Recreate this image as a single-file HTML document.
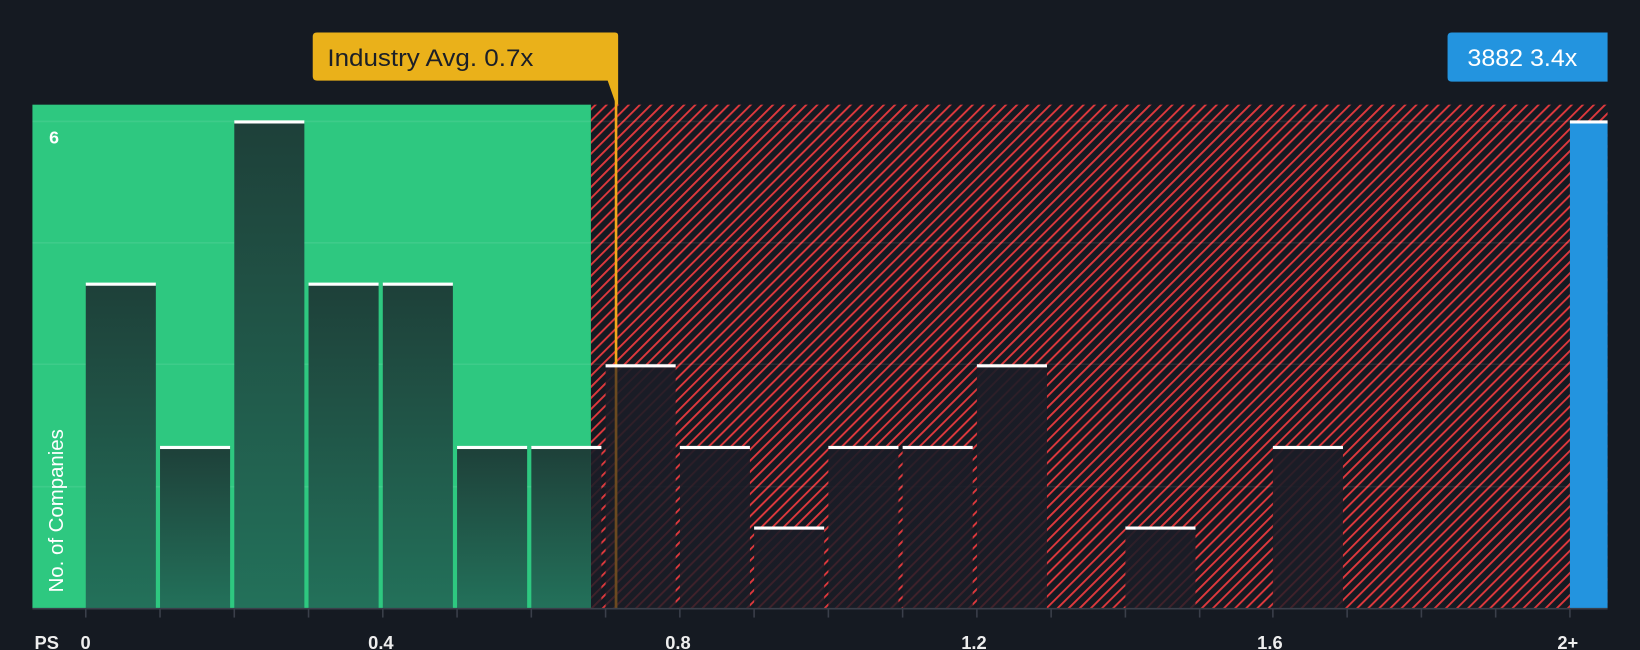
<!DOCTYPE html>
<html><head><meta charset="utf-8"><style>
html,body{margin:0;padding:0;background:#151a22;width:1640px;height:650px;overflow:hidden}
svg{display:block}
text{font-family:"Liberation Sans",Arial,sans-serif}
</style></head><body>
<svg width="1640" height="650" viewBox="0 0 1568 621" preserveAspectRatio="none" xmlns="http://www.w3.org/2000/svg">
<defs>
<pattern id="h" patternUnits="userSpaceOnUse" width="7.5" height="7.5" patternTransform="rotate(45)">
<rect width="7.5" height="7.5" fill="#151a22"/>
<rect x="0" y="0" width="1.8" height="7.5" fill="#e0393d"/>
</pattern>
<linearGradient id="g" x1="0" y1="0" x2="0" y2="1">
<stop offset="0" stop-color="#1e4039"/><stop offset="1" stop-color="#23715a"/>
</linearGradient>
<linearGradient id="d" x1="0" y1="0" x2="0" y2="1">
<stop offset="0" stop-color="#1a1c26" stop-opacity="0.92"/><stop offset="1" stop-color="#1a1c26" stop-opacity="0.8"/>
</linearGradient>
</defs>
<rect width="1568" height="621" fill="#151a22"/>
<rect x="31" y="100" width="534" height="481" fill="#2ec880"/>
<rect x="565" y="100" width="972" height="481" fill="url(#h)"/>
<g stroke="#ffffff" stroke-opacity="0.08" stroke-width="1.5">
<line x1="31" y1="116" x2="1537" y2="116"/><line x1="31" y1="232" x2="1537" y2="232"/>
<line x1="31" y1="348" x2="1537" y2="348"/><line x1="31" y1="465" x2="1537" y2="465"/>
</g>
<line x1="589" y1="90" x2="589" y2="581" stroke="#f0a91b" stroke-width="2.5"/>
<g>
<rect x="82" y="271" width="67" height="310" fill="url(#g)"/>
<rect x="153" y="427" width="67" height="154" fill="url(#g)"/>
<rect x="224" y="116" width="67" height="465" fill="url(#g)"/>
<rect x="295" y="271" width="67" height="310" fill="url(#g)"/>
<rect x="366" y="271" width="67" height="310" fill="url(#g)"/>
<rect x="437" y="427" width="67" height="154" fill="url(#g)"/>
<rect x="508" y="427" width="57" height="154" fill="url(#g)"/>
<rect x="565" y="427" width="10" height="154" fill="url(#d)"/>
<rect x="579" y="349" width="67" height="232" fill="url(#d)"/>
<rect x="650" y="427" width="67" height="154" fill="url(#d)"/>
<rect x="721" y="504" width="67" height="77" fill="url(#d)"/>
<rect x="792" y="427" width="67" height="154" fill="url(#d)"/>
<rect x="863" y="427" width="67" height="154" fill="url(#d)"/>
<rect x="934" y="349" width="67" height="232" fill="url(#d)"/>
<rect x="1076" y="504" width="67" height="77" fill="url(#d)"/>
<rect x="1217" y="427" width="67" height="154" fill="url(#d)"/>
<rect x="1501" y="116" width="36" height="465" fill="#2394df"/>
</g>
<line x1="589" y1="349" x2="589" y2="581" stroke="#6b4a20" stroke-width="2.5"/>
<g fill="#ffffff">
<rect x="82" y="270" width="67" height="3"/><rect x="153" y="426" width="67" height="3"/>
<rect x="224" y="115" width="67" height="3"/><rect x="295" y="270" width="67" height="3"/>
<rect x="366" y="270" width="67" height="3"/><rect x="437" y="426" width="67" height="3"/>
<rect x="508" y="426" width="67" height="3"/><rect x="579" y="348" width="67" height="3"/>
<rect x="650" y="426" width="67" height="3"/><rect x="721" y="503" width="67" height="3"/>
<rect x="792" y="426" width="67" height="3"/><rect x="863" y="426" width="67" height="3"/>
<rect x="934" y="348" width="67" height="3"/><rect x="1076" y="503" width="67" height="3"/>
<rect x="1217" y="426" width="67" height="3"/><rect x="1501" y="115" width="36" height="3"/>
</g>
<line x1="31" y1="581.5" x2="1537" y2="581.5" stroke="#3a3f4a" stroke-width="1.5"/>
<g stroke="#3a3f4a" stroke-width="1.5">
<line x1="82" y1="581" x2="82" y2="590"/><line x1="153" y1="581" x2="153" y2="590"/><line x1="224" y1="581" x2="224" y2="590"/><line x1="295" y1="581" x2="295" y2="590"/><line x1="366" y1="581" x2="366" y2="590"/><line x1="437" y1="581" x2="437" y2="590"/><line x1="508" y1="581" x2="508" y2="590"/><line x1="579" y1="581" x2="579" y2="590"/><line x1="650" y1="581" x2="650" y2="590"/><line x1="721" y1="581" x2="721" y2="590"/><line x1="792" y1="581" x2="792" y2="590"/><line x1="863" y1="581" x2="863" y2="590"/><line x1="934" y1="581" x2="934" y2="590"/><line x1="1005" y1="581" x2="1005" y2="590"/><line x1="1076" y1="581" x2="1076" y2="590"/><line x1="1147" y1="581" x2="1147" y2="590"/><line x1="1217" y1="581" x2="1217" y2="590"/><line x1="1288" y1="581" x2="1288" y2="590"/><line x1="1359" y1="581" x2="1359" y2="590"/><line x1="1430" y1="581" x2="1430" y2="590"/><line x1="1501" y1="581" x2="1501" y2="590"/>
</g>
<g fill="#eeeeee" font-size="17.5" font-weight="bold">
<text x="33" y="620">PS</text>
<text x="77" y="620">0</text>
<text x="352" y="620">0.4</text>
<text x="636" y="620">0.8</text>
<text x="919" y="620">1.2</text>
<text x="1202" y="620">1.6</text>
<text x="1489" y="620">2+</text>
</g>
<text x="47" y="137" fill="#ffffff" font-size="17" font-weight="bold">6</text>
<text transform="translate(60,566) rotate(-90)" fill="#ffffff" font-size="19.5">No. of Companies</text>
<path d="M303 31 H588 Q591 31 591 34 V100 L589 100 L581 77 H303 Q299 77 299 73 V35 Q299 31 303 31 Z" fill="#eab11a"/>
<text x="313" y="63" fill="#1b1f28" font-size="23" textLength="197" lengthAdjust="spacingAndGlyphs">Industry Avg. 0.7x</text>
<path d="M1388 31 H1537 V78 H1388 Q1384 78 1384 74 V35 Q1384 31 1388 31 Z" fill="#2394df"/>
<text x="1403" y="63" fill="#ffffff" font-size="23" textLength="105" lengthAdjust="spacingAndGlyphs">3882 3.4x</text>
</svg>
</body></html>
